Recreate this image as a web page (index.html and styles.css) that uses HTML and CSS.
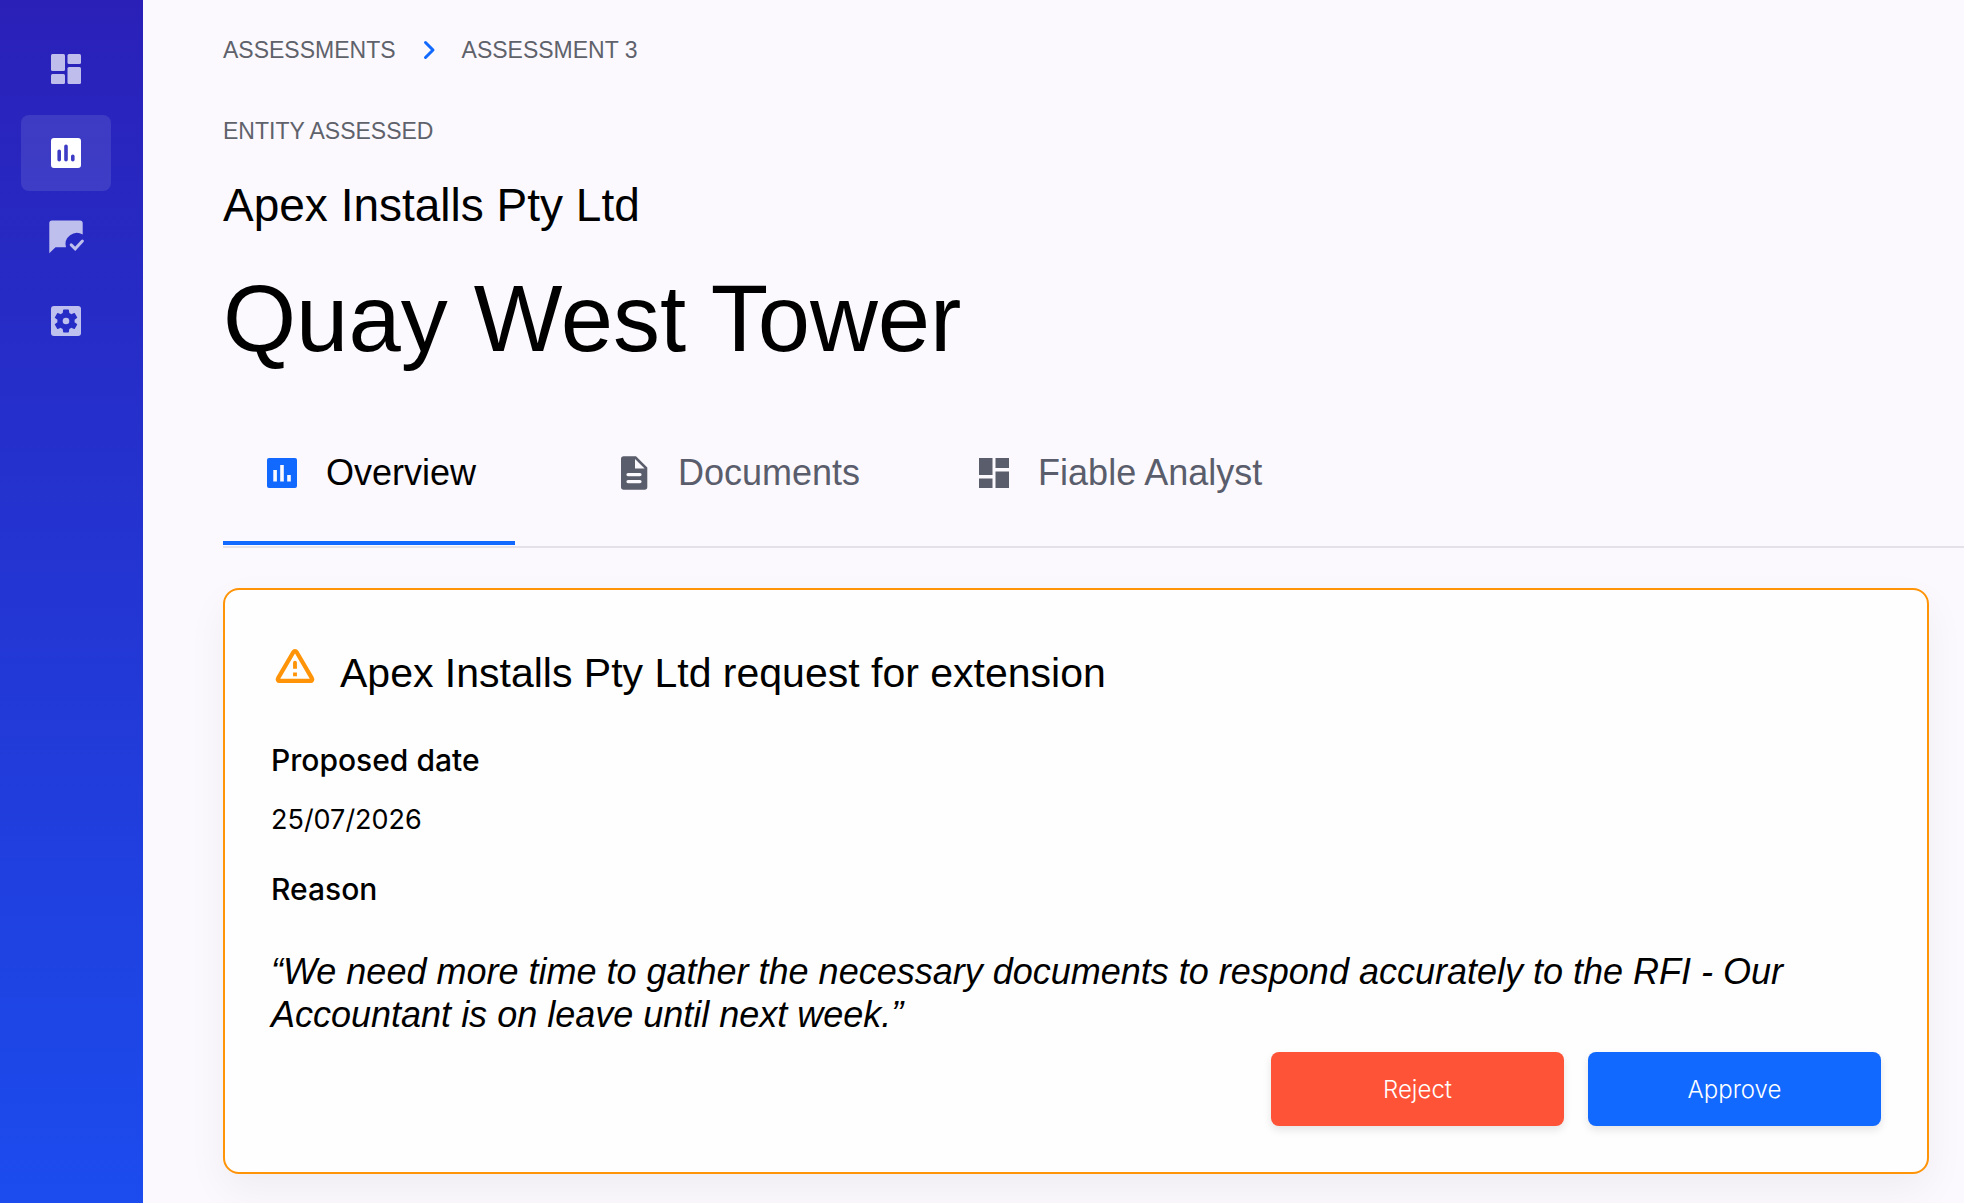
FILE: index.html
```html
<!DOCTYPE html>
<html lang="en">
<head>
    <meta charset="UTF-8">
    <meta name="viewport" content="width=device-width, initial-scale=1.0">
    <title>Quay West Tower</title>
    <link rel="stylesheet" href="styles.css">
</head>
<body>
    <div class="layout">
        <nav class="sidebar" aria-label="Main">
            <a href="#" class="side-link" aria-label="Dashboard">
                <svg class="icon" viewBox="0 0 40 40">
                    <rect x="5" y="5" width="14" height="17" rx="1.5"/>
                    <rect x="5" y="25" width="14" height="10" rx="1.5"/>
                    <rect x="21.5" y="5" width="13.5" height="10" rx="1.5"/>
                    <rect x="21.5" y="18" width="13.5" height="17" rx="1.5"/>
                </svg>
            </a>
            <a href="#" class="side-link active" aria-label="Assessments" aria-current="page">
                <svg class="icon" viewBox="0 0 40 40">
                    <path fill-rule="evenodd" d="M8 5h24a3 3 0 0 1 3 3v24a3 3 0 0 1-3 3H8a3 3 0 0 1-3-3V8a3 3 0 0 1 3-3zM13.2 16.5a1.8 1.8 0 0 0-1.8 1.8v8.4a1.8 1.8 0 0 0 3.6 0v-8.4a1.8 1.8 0 0 0-1.8-1.8zM20 11.5a1.8 1.8 0 0 0-1.8 1.8v13.4a1.8 1.8 0 0 0 3.6 0V13.3a1.8 1.8 0 0 0-1.8-1.8zM26.8 21.5a1.8 1.8 0 0 0-1.8 1.8v3.4a1.8 1.8 0 0 0 3.6 0v-3.4a1.8 1.8 0 0 0-1.8-1.8z"/>
                </svg>
            </a>
            <a href="#" class="side-link" aria-label="Requests">
                <svg class="icon" viewBox="0 0 40 40">
                    <path d="M6 3.500h28a2.700 2.700 0 0 1 2.700 2.700V17.500A11.300 11.300 0 0 0 20 30.200H9.500L3.300 36.300V6.200A2.700 2.700 0 0 1 6 3.500z"/>
                    <path class="tick" d="M25.200 27.900l4 3.900 7.200-7.700"/>
                </svg>
            </a>
            <a href="#" class="side-link" aria-label="Settings">
                <svg class="icon" viewBox="0 0 24 24">
                    <mask id="gear">
                        <rect width="24" height="24" fill="#fff"/>
                        <path transform="translate(3.36 3.36) scale(.72)" fill="#000" d="M19.14 12.94c.04-.3.06-.61.06-.94 0-.32-.02-.64-.07-.94l2.030-1.580c.18-.14.23-.41.12-.61l-1.920-3.320c-.12-.22-.37-.29-.59-.22l-2.390.96c-.5-.38-1.030-.7-1.620-.94l-.36-2.540c-.04-.24-.24-.41-.48-.41h-3.840c-.24 0-.43.17-.47.41l-.36 2.540c-.59.24-1.130.57-1.620.94l-2.390-.96c-.22-.08-.47 0-.59.22L2.740 8.870c-.12.21-.08.47.12.61l2.030 1.580c-.05.3-.09.63-.09.94s.02.64.07.94l-2.030 1.580c-.18.14-.23.41-.12.61l1.920 3.320c.12.22.37.29.59.22l2.390-.96c.5.38 1.030.7 1.620.94l.36 2.540c.05.24.24.41.48.41h3.840c.24 0 .44-.17.47-.41l.36-2.540c.59-.24 1.130-.56 1.620-.94l2.390.96c.22.08.47 0 .59-.22l1.920-3.320c.12-.22.07-.47-.12-.61l-2.010-1.580z"/>
                        <circle cx="12" cy="12" r="2" fill="#fff"/>
                    </mask>
                    <rect x="3" y="3" width="18" height="18" rx="1.8" mask="url(#gear)"/>
                </svg>
            </a>
        </nav>

        <main class="content">
            <nav class="breadcrumb" aria-label="Breadcrumb">
                <a href="#">ASSESSMENTS</a>
                <svg class="chevron" viewBox="0 0 16 24">
                    <path d="M4.500 4.500l7.500 7.500-7.500 7.500"/>
                </svg>
                <span>ASSESSMENT 3</span>
            </nav>

            <p class="label">ENTITY ASSESSED</p>
            <p class="entity">Apex Installs Pty Ltd</p>
            <h1>Quay West Tower</h1>

            <div class="tabs" role="tablist">
                <button class="tab active" role="tab" aria-selected="true">
                    <svg class="icon" viewBox="0 0 40 40">
                        <path fill-rule="evenodd" d="M7 5h26a2 2 0 0 1 2 2v26a2 2 0 0 1-2 2H7a2 2 0 0 1-2-2V7a2 2 0 0 1 2-2zM11.300 17v11.500h3.600V17zM18.200 12v16.500h3.600V12zM25.200 22v6.500h3.600V22z"/>
                    </svg>
                    Overview
                </button>
                <button class="tab" role="tab" aria-selected="false">
                    <svg class="icon" viewBox="0 0 40 40">
                        <path fill-rule="evenodd" d="M9.700 3.300H22L33.300 14.600V34a2.700 2.700 0 0 1-2.700 2.700H9.700A2.700 2.700 0 0 1 7 34V6a2.700 2.700 0 0 1 2.700-2.700zM21 6v9.600h9.600zM14 20a1.500 1.500 0 0 0 0 3.200h12a1.500 1.500 0 0 0 0-3.200zM14 27a1.500 1.500 0 0 0 0 3.200h12a1.500 1.500 0 0 0 0-3.200z"/>
                    </svg>
                    Documents
                </button>
                <button class="tab" role="tab" aria-selected="false">
                    <svg class="icon" viewBox="0 0 40 40">
                        <path d="M5 5h13.500v17H5zM5 25.500h13.500V35H5zM21.500 5H35v10H21.500zM21.500 18.500H35V35H21.500z"/>
                    </svg>
                    Fiable Analyst
                </button>
            </div>

            <section class="card">
                <div class="card-header">
                    <svg class="warning" viewBox="0 0 24 24">
                        <path class="triangle" d="M11.100 4L2.300 19.100a.9.9 0 0 0 .8 1.400h17.800a.9.9 0 0 0 .8-1.400L12.900 4a1.050 1.050 0 0 0-1.800 0z"/>
                        <path d="M12 9a1.100 1.100 0 0 1 1.100 1.100V13.500h-2.200v-3.400A1.100 1.100 0 0 1 12 9zM10.900 15.700h2.200v2.200h-2.200z"/>
                    </svg>
                    <h2>Apex Installs Pty Ltd request for extension</h2>
                </div>
                <h3>Proposed date</h3>
                <p class="date">25/07/2026</p>
                <h3>Reason</h3>
                <p class="reason">“We need more time to gather the necessary documents to respond accurately to the RFI - Our Accountant is on leave until next week.”</p>
                <div class="actions">
                    <button class="btn reject">Reject</button>
                    <button class="btn approve">Approve</button>
                </div>
            </section>
        </main>
    </div>
</body>
</html>
```
FILE: styles.css
```css
* {
    box-sizing: border-box;
}

body {
    font-family: "Liberation Sans", Arial, sans-serif;
    background: #fbf9fd;
    color: #000;
    margin: 0;
}

h1, h2, h3, p {
    margin: 0;
    font-weight: 400;
}

.layout {
    display: flex;
    min-height: 100vh;
}

/* sidebar */
.sidebar {
    flex: none;
    display: flex;
    flex-direction: column;
    gap: 8px;
    width: 143px;
    padding: 31px 32px 31px 21px;
    background: linear-gradient(#2a20b8, #1c4cee);
}

.side-link {
    display: flex;
    align-items: center;
    justify-content: center;
    height: 76px;
    border-radius: 8px;
    color: rgba(255, 255, 255, 0.7);
}

.side-link.active {
    background: rgba(255, 255, 255, 0.1);
    color: #fff;
}

.icon {
    flex: none;
    width: 40px;
    height: 40px;
    fill: currentColor;
}

.tick {
    fill: none;
    stroke: currentColor;
    stroke-width: 3;
    stroke-linecap: round;
}

/* page header */
.content {
    flex: 1;
    min-width: 0;
    padding: 32px 0 28px 80px;
}

.breadcrumb,
.label {
    font-size: 23px;
    line-height: 36px;
    color: #5f626b;
}

.breadcrumb {
    display: flex;
    align-items: center;
    gap: 25px;
}

.breadcrumb a {
    color: inherit;
    text-decoration: none;
}

.chevron {
    width: 16px;
    height: 24px;
    fill: none;
    stroke: #1269ff;
    stroke-width: 3;
    stroke-linecap: round;
    stroke-linejoin: round;
}

.label {
    margin-top: 45px;
}

.entity {
    margin-top: 28px;
    font-size: 46px;
    line-height: 56px;
}

h1 {
    margin-top: 30px;
    font-size: 94px;
    line-height: 112px;
}

/* tabs */
.tabs {
    display: flex;
    gap: 36px;
    margin-top: 46px;
    padding-bottom: 1px;
    border-bottom: 2px solid #e4e2e8;
}

.tab {
    display: flex;
    align-items: center;
    gap: 24px;
    padding: 32px 39px 48px;
    border: none;
    border-bottom: 4px solid transparent;
    background: none;
    font-family: inherit;
    font-size: 36px;
    line-height: 40px;
    color: #5a5d6b;
    cursor: pointer;
}

.tab.active {
    margin-right: 24px;
    border-bottom-color: #1269ff;
    color: #000;
}

.tab.active .icon {
    color: #1269ff;
}

/* extension request */
.card {
    margin: 40px 35px 0 0;
    padding: 46px;
    border: 2px solid #ff9408;
    border-radius: 16px;
    background: #fefefe;
    box-shadow: 0 16px 40px rgba(0, 0, 0, 0.05);
}

.card-header {
    display: flex;
    gap: 24px;
    padding: 9px 0 0 3px;
}

.card-header h2 {
    font-size: 41px;
    line-height: 56px;
}

.warning {
    flex: none;
    width: 42px;
    height: 42px;
    fill: #ff9408;
}

.triangle {
    fill: none;
    stroke: #ff9408;
    stroke-width: 2.4;
}

.card h3 {
    margin-top: 39px;
    font-family: Inter, sans-serif;
    font-size: 30px;
    font-weight: 500;
    line-height: 40px;
}

.date {
    margin: 22px 0 -8px;
    font-family: Inter, sans-serif;
    font-size: 27px;
    line-height: 36px;
}

.reason {
    margin-top: 41px;
    font-size: 36px;
    font-style: italic;
    line-height: 43px;
}

.actions {
    display: flex;
    justify-content: flex-end;
    gap: 24px;
    margin-top: 16px;
}

.btn {
    width: 293px;
    height: 74px;
    border: none;
    border-radius: 8px;
    font-family: Inter, sans-serif;
    font-size: 24px;
    font-weight: 300;
    color: #fff;
    box-shadow: 0 4px 8px rgba(0, 0, 0, 0.1);
    cursor: pointer;
}

.reject {
    background: #ff5338;
}

.approve {
    background: #1269ff;
}
```
